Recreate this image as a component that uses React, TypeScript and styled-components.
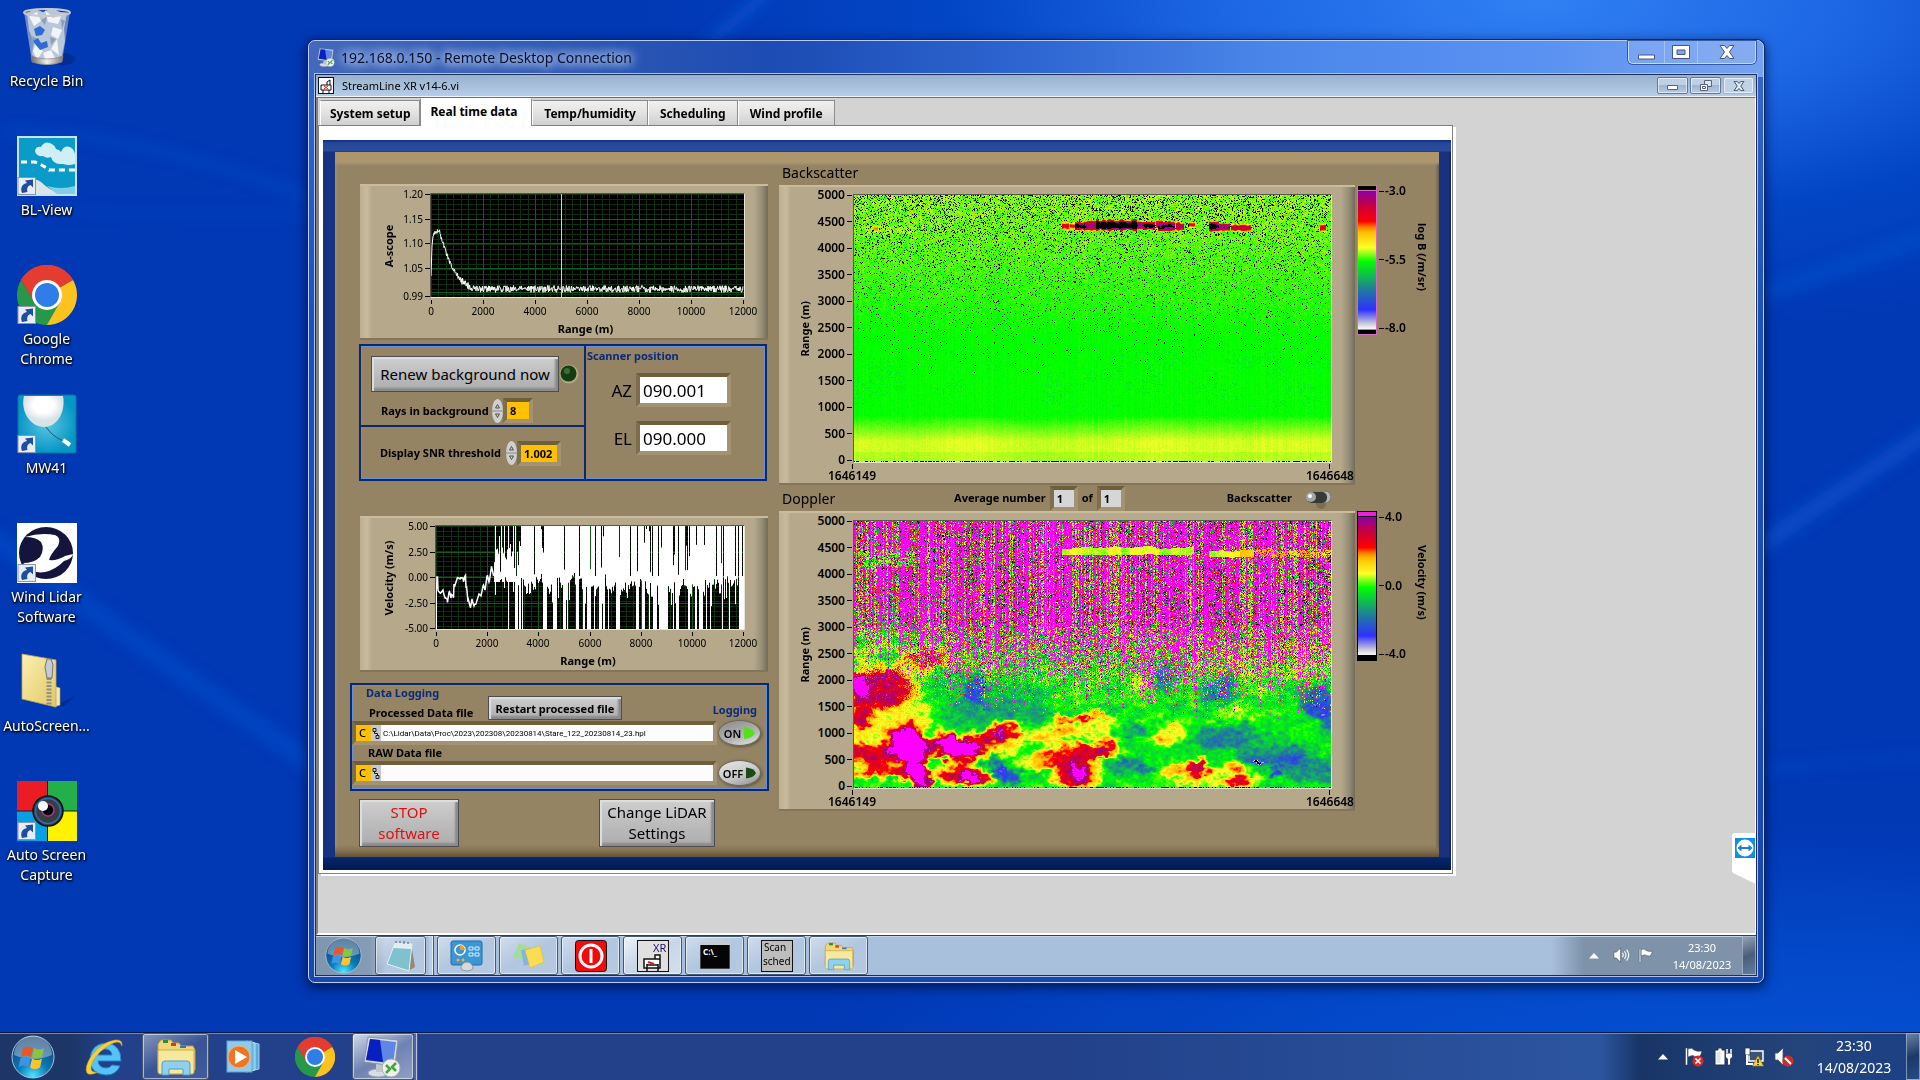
import React, { useEffect, useRef } from "react";
import styled, { createGlobalStyle, css } from "styled-components";

const Global = createGlobalStyle`
  *, *::before, *::after { box-sizing: border-box; }
  html, body { margin: 0; height: 100%; }
  body { font-family: "Noto Sans", "Open Sans", sans-serif; font-size: 14px; overflow: hidden; background: #0138b4; }
  #root { height: 100%; }
  button, input { font-family: inherit; margin: 0; }
  svg { display: block; flex: none; }
`;

/* ---------- random helpers ---------- */

function makeRandom(seed: number) {
  let s = seed >>> 0;
  return () => {
    s = (s + 0x6d2b79f5) >>> 0;
    let t = Math.imul(s ^ (s >>> 15), 1 | s);
    t = (t + Math.imul(t ^ (t >>> 7), 61 | t)) ^ t;
    return ((t ^ (t >>> 14)) >>> 0) / 4294967296;
  };
}

function lattice(x: number, y: number) {
  let h = Math.imul(x, 374761393) + Math.imul(y, 668265263);
  h = Math.imul(h ^ (h >>> 13), 1274126177);
  return ((h ^ (h >>> 16)) >>> 0) / 4294967296;
}

function smooth(x: number, y: number) {
  const xi = Math.floor(x);
  const yi = Math.floor(y);
  const fx = x - xi;
  const fy = y - yi;
  const u = fx * fx * (3 - 2 * fx);
  const v = fy * fy * (3 - 2 * fy);
  const a = lattice(xi, yi) * (1 - u) + lattice(xi + 1, yi) * u;
  const b = lattice(xi, yi + 1) * (1 - u) + lattice(xi + 1, yi + 1) * u;
  return (a * (1 - v) + b * v) * 2 - 1;
}

/* ---------- colour ramp shared by both maps ---------- */

type Stop = [number, number, number, number];
const ramp: Stop[] = [
  [0, 250, 250, 250],
  [0.04, 200, 200, 215],
  [0.14, 48, 48, 255],
  [0.28, 32, 120, 160],
  [0.49, 0, 255, 0],
  [0.59, 255, 255, 40],
  [0.7, 255, 190, 0],
  [0.74, 255, 120, 0],
  [0.78, 255, 0, 0],
  [0.89, 200, 0, 60],
  [1, 140, 0, 165],
];

function colourAt(v: number, over: number[]): number[] {
  if (v > 1) return over;
  if (v < 0) return [0, 0, 0];
  for (let i = 1; i < ramp.length; i++) {
    if (v <= ramp[i][0]) {
      const a = ramp[i - 1];
      const b = ramp[i];
      const t = (v - a[0]) / (b[0] - a[0]);
      return [a[1] + (b[1] - a[1]) * t, a[2] + (b[2] - a[2]) * t, a[3] + (b[3] - a[3]) * t];
    }
  }
  return over;
}

const rampCss = ramp
  .slice()
  .reverse()
  .map((s) => `rgb(${s[1]},${s[2]},${s[3]}) ${Math.round((1 - s[0]) * 100)}%`)
  .join(", ");

const MAP_W = 477;
const MAP_H = 267;

/* start, end, height in metres, half thickness, strength */
const cloudBits = [
  [208, 214, 4420, 50, 0.28], [216, 221, 4420, 40, 0.24], [221, 230, 4420, 60, 0.46], [230, 244, 4430, 62, 0.42],
  [242, 282, 4440, 72, 0.56], [282, 290, 4435, 60, 0.42], [290, 300, 4425, 60, 0.46], [302, 308, 4460, 60, 0.32],
  [304, 320, 4415, 70, 0.45], [322, 329, 4415, 60, 0.36], [335, 340, 4450, 40, 0.25], [355, 364, 4415, 65, 0.48],
  [364, 375, 4405, 55, 0.4], [377, 396, 4390, 45, 0.34], [466, 471, 4390, 50, 0.28], [20, 23, 4375, 40, 0.22],
];

function backscatter(px: (x: number, y: number, c: number[]) => void) {
  const rnd = makeRandom(11);
  for (let y = 0; y < MAP_H; y++) {
    const h = 5000 * (1 - y / (MAP_H - 2));
    let base = 0.49;
    if (h < 850) base = 0.49 + 0.082 * Math.min(1, Math.max(0, (850 - h) / 480));
    if (h < 160) base -= 0.012;
    const up = Math.max(0, (h - 2300) / 2700);
    const fall = Math.max(0, (h - 1500) / 3500);
    const black = 0.2 * Math.pow(fall, 1.7);
    for (let x = 0; x < MAP_W; x++) {
      const col = (lattice(x, 7) - 0.5) * 0.01;
      const n = rnd() + rnd() - 1;
      let v = base + col + up * 0.052 + n * (0.01 + 0.055 * up) + (h < 800 ? smooth(x / 60, 3) * 0.008 : 0);
      if (h > 1000 && h < 2100 && n < -0.4 && smooth(x / 20, y / 12) > 0.1) v -= 0.03;
      if (h > 4280 && h < 4420 && x > 10 && x < 60) v += 0.015;
      let hole = rnd() < black;
      for (const [a, b, c, t, s] of cloudBits) {
        const thick = t * 1.5 * (1 + smooth(x / 3, c / 9) * 0.25);
        if (x >= a && x <= b && Math.abs(h - c) < thick) {
          const d = Math.abs(h - c) / thick;
          v = Math.max(v, 0.5 + s * (1.2 - d * d * 0.9 + smooth(x / 3, y / 2) * 0.15));
          hole = false;
        }
      }
      if (y === MAP_H - 1) hole = rnd() < 0.5;
      px(x, y, hole ? [0, 0, 0] : colourAt(v, [0, 0, 0]));
    }
  }
}

/* centre x, centre y, radius x, radius y, amplitude */
const blobs = [
  [53, 221, 16, 15, 0.56], [60, 240, 10, 14, 0.42], [28, 168, 28, 16, 0.42], [2, 168, 9, 14, 0.3],
  [18, 233, 28, 9, 0.42], [68, 256, 8, 9, 0.52], [33, 250, 34, 6, 0.32], [6, 197, 9, 10, 0.32],
  [92, 225, 20, 9, 0.44], [90, 216, 10, 9, 0.28], [108, 231, 16, 9, 0.4], [122, 222, 20, 9, 0.32],
  [138, 214, 12, 6, 0.22], [151, 208, 12, 7, 0.34], [108, 253, 20, 9, 0.38], [122, 256, 14, 8, 0.24],
  [70, 137, 24, 8, 0.26], [213, 198, 18, 4, 0.24], [238, 194, 18, 4, 0.26], [216, 251, 15, 10, 0.38],
  [228, 230, 28, 8, 0.34], [190, 240, 22, 8, 0.24], [230, 250, 14, 12, 0.26], [250, 226, 14, 8, 0.2],
  [344, 245, 8, 6, 0.28], [330, 249, 22, 7, 0.14], [380, 244, 8, 5, 0.2], [386, 261, 12, 6, 0.3], [362, 254, 34, 10, 0.12],
  [317, 212, 16, 10, 0.15], [310, 222, 8, 6, 0.1], [380, 191, 20, 8, 0.11], [420, 170, 22, 7, 0.08],
  [180, 213, 34, 9, 0.16], [238, 208, 32, 8, 0.14], [150, 230, 12, 10, 0.1], [40, 195, 40, 14, 0.13],
  [20, 215, 34, 8, 0.1], [70, 190, 8, 12, 0.08], [285, 163, 12, 6, 0.12], [240, 175, 34, 7, 0.06],
  [60, 145, 60, 20, 0.08], [420, 140, 60, 16, 0.08],
  [100, 160, 24, 12, -0.12], [121, 169, 9, 14, -0.2], [85, 190, 26, 14, -0.08], [155, 190, 38, 18, -0.11],
  [152, 254, 10, 8, -0.3], [142, 243, 12, 7, -0.14], [276, 209, 18, 6, -0.15], [272, 243, 18, 8, -0.14],
  [308, 160, 9, 12, -0.18], [362, 175, 16, 9, -0.18], [372, 158, 8, 10, -0.14], [465, 183, 16, 12, -0.24],
  [474, 198, 8, 9, -0.2], [440, 168, 22, 7, -0.1], [372, 216, 28, 9, -0.16], [420, 233, 30, 9, -0.17],
  [450, 246, 36, 12, -0.13], [404, 242, 4, 2, -0.4], [418, 251, 4, 4, -0.2], [293, 248, 8, 5, -0.12], [38, 137, 10, 7, -0.12],
];

function doppler(px: (x: number, y: number, c: number[]) => void) {
  const rnd = makeRandom(29);
  const magenta = [255, 0, 255];
  const strong = [0.9, 0.98, 0.8, 0.6, 0.56, 0.68, 0.95, 0.85, 0.3, -1, -1, -1, 0.97, 0.5];
  const weak = [0.6, 0.56, 0.5, 0.68, 0.8, 0.47, 0.53, 0.9, 0.58, -1, 0.3, 0.62, 0.07, 0.75];
  for (let x = 0; x < MAP_W; x++) {
    const kind = rnd();
    const share = kind < 0.32 ? 0.72 + rnd() * 0.2 : kind < 0.68 ? 0.42 + rnd() * 0.2 : 0.1 + rnd() * 0.2;
    const floor = 1700 + (x < 90 ? 520 * (1 - x / 180) : 0) + smooth(x / 40, 9) * 180 + (rnd() - 0.5) * 900;
    for (let y = 0; y < MAP_H; y++) {
      const h = 5000 * (1 - y / (MAP_H - 2));
      let v =
        0.465 + smooth(x / 17, y / 8) * 0.05 + smooth(x / 6 + 40, y / 4) * 0.05 +
        smooth(x / 2.5, y / 2) * 0.045 + (rnd() - 0.5) * 0.02;
      for (const [cx, cy, rx, ry, a] of blobs) {
        const dx = (x - cx + smooth(x / 7, y / 5 + 80) * 5 + smooth(x / 3, y / 2 + 30) * 2) / rx;
        const dy = (y - cy + smooth(x / 7 + 60, y / 5) * 4 + smooth(x / 3 + 20, y / 2) * 2) / ry;
        const d = dx * dx + dy * dy;
        if (d < 5) v += a * Math.exp(-d * d * 0.45);
      }
      if (h > 1200) v += (rnd() - 0.5) * 0.2 * Math.min(1, (h - 1200) / 900);
      const chance = Math.min(0.97, Math.max(0, (h - floor) / 1100));
      const drop = x > 350 ? 40 : 0;
      const edge = smooth(x / 9, 2) * 30 + smooth(x / 3, 6) * 15;
      const band =
        h > 4370 - drop + edge / 3 && h < 4505 - drop + edge &&
        ((x > 207 && x < 340) || (x > 354 && x < 400) || (x > 400 && rnd() < 0.55));
      if (band) {
        v = 0.58 + smooth(x / 10, 5) * 0.05 + (x > 385 ? 0.09 : 0) + (rnd() - 0.5) * 0.05;
      } else if (rnd() < chance) {
        const patch = x > 8 && x < 62 && h > 4150 && h < 4450 && rnd() < 0.4;
        const m = h < 3200 ? share * (0.75 + (h - 1800) / 5600) : share;
        if (patch) v = 0.47 + rnd() * 0.12;
        else if (rnd() < m) v = 2;
        else v = (share > 0.35 && h > 3000 ? strong : weak)[Math.floor(rnd() * 14)];
      }
      if (y === MAP_H - 1) v = rnd() < 0.4 ? -1 : 0.48;
      px(x, y, colourAt(v, magenta));
    }
  }
}

/* ---------- desktop ---------- */

const Desktop = styled.div`
  position: relative;
  display: flex;
  flex-direction: column;
  min-height: 100vh;
  overflow: hidden;
  background:
    radial-gradient(ellipse 900px 340px at 80% 0, #3180f3 0%, #1c66e4 35%, rgba(3, 74, 203, 0.75) 65%, rgba(1, 56, 180, 0) 100%),
    radial-gradient(ellipse 1000px 260px at 92% 100%, #0552d4 0%, #0349ca 45%, rgba(1, 56, 180, 0) 100%),
    #0138b4;
`;

const Streaks = styled.svg`
  position: absolute;
  inset: 0;
  width: 100%;
  height: 100%;
`;

const Shortcuts = styled.nav`
  position: relative;
  flex: 1;
  width: 93px;
  padding-top: 7px;
`;

const Shortcut = styled.a`
  display: flex;
  flex-direction: column;
  align-items: center;
  gap: 4px;
  height: 129px;
  color: #fff;
  text-decoration: none;
  text-align: center;
  font-size: 14px;
  line-height: 20px;
  text-shadow: 1px 1px 2px #000, 0 1px 3px #000;
`;

const ArrowBadge = () => (
  <g>
    <rect x="1" y="41.500" width="17.500" height="17" fill="#e6edf5" stroke="#8a97a8" />
    <path d="M5 57c-2-5 0-9 5-10l-2-2.500 8-1v8l-2.500-2.500c-3 1-4 4-3 7z" fill="#1f4f9c" />
  </g>
);

const ChromeMark = ({ size }: { size: number }) => (
  <svg width={size} height={size} viewBox="0 0 60 60">
    <path d="M30 30 4 15A30 30 0 0 1 56 15z" fill="#e53c30" />
    <path d="M30 30 56 15A30 30 0 0 1 30 60l-9-20z" fill="#fcc31e" />
    <path d="M30 30 43 37 30 60A30 30 0 0 1 4 15l14 23z" fill="#27984a" />
    <path d="M4 15A30 30 0 0 1 56 15H30L17 37z" fill="#e53c30" />
    <circle cx="30" cy="30" r="15" fill="#fff" />
    <circle cx="30" cy="30" r="12" fill="#2f7de9" />
  </svg>
);

const shortcutIcons: Record<string, React.ReactNode> = {
  bin: (
    <svg width="60" height="60" viewBox="0 0 60 60">
      <defs>
        <linearGradient id="binBody" x1="0" x2="1">
          <stop offset="0" stopColor="#7f97c4" stopOpacity=".8" />
          <stop offset=".5" stopColor="#c3d2e4" stopOpacity=".9" />
          <stop offset="1" stopColor="#7189bd" stopOpacity=".8" />
        </linearGradient>
        <linearGradient id="binBase" x1="0" x2="1">
          <stop offset="0" stopColor="#6f6b67" />
          <stop offset=".5" stopColor="#f2efec" />
          <stop offset="1" stopColor="#7c7873" />
        </linearGradient>
      </defs>
      <ellipse cx="46" cy="52" rx="12" ry="6" fill="#02227a" opacity=".5" />
      <path d="M7 5 15 55q15 6 30 0L53 5z" fill="url(#binBody)" />
      <path d="M10 6 18 2l8 3 9-4 8 4 7 1-3 16 1 12-4 18-10 3-14 0-5-8 2-12-5-12z" fill="#b9c8d8" />
      <path d="M12 9l8-4 4 9-7 5zM28 3l8 8 9-4-4 10-10-2zM36 20l9 3-4 9-7-4zM18 38l8 6-6 9-4-9zM40 32l-6 10 8 6zM26 46l8-3 4 8-9 4z" fill="#f1f5f8" />
      <path d="M24 13l6-3-2 8zM44 12l4 2-3 8zM33 30l6 2-5 6zM15 29l5 3-3 5z" fill="#8c9fb8" />
      <path d="M17 22l6-3 5 4-3 5-6 1zM16 34l5-3 3 5 6-2 1 6-8 3z" fill="#2e6bd2" />
      <ellipse cx="30" cy="5.500" rx="23" ry="3.500" fill="none" stroke="#c9c9c9" strokeWidth="2" />
      <path d="M14 49q16 6 32 0l-1 6q-15 5-30 0z" fill="url(#binBase)" stroke="#817d78" strokeWidth=".6" />
    </svg>
  ),
  blview: (
    <svg width="60" height="60" viewBox="0 0 60 60">
      <rect width="60" height="60" fill="#c8e3ec" />
      <rect x="2" y="2" width="56" height="56" fill="#0a9bc8" />
      <path d="M18 15q1-5 6-4 3-6 9-4 5 2 6 6 4 1 5 3 3-7 9-5 4 2 5 7v10q-6 2-12 0-10 1-12-7-4 2-8-1-7 1-8-5z" fill="#cfeef6" />
      <path d="M4 26h14q8 3 14 8h26" fill="none" stroke="#fff" strokeWidth="3" strokeDasharray="6 4" />
      <path d="M2 44q14-4 22 2 8 8 20 12H2z" fill="#dfe3e4" />
      <path d="M30 50q14 4 28 0v8H40z" fill="#7fd0e6" />
      <ArrowBadge />
    </svg>
  ),
  mw41: (
    <svg width="60" height="60" viewBox="0 0 60 60">
      <defs>
        <radialGradient id="sky"><stop offset="0" stopColor="#5cc6e2" /><stop offset="1" stopColor="#0797c5" /></radialGradient>
        <radialGradient id="balloon" cy=".3"><stop offset=".5" stopColor="#fff" /><stop offset="1" stopColor="#d9e2e6" /></radialGradient>
      </defs>
      <rect x="1" y="1" width="58" height="58" rx="2" fill="url(#sky)" stroke="#07749c" />
      <path d="M7 2h39c3 16-6 31-19 31S3 18 7 2z" fill="url(#balloon)" />
      <path d="M29 33q6 9 17 14" fill="none" stroke="#24586c" />
      <path d="M46 46l7 5" stroke="#fff" strokeWidth="4" />
      <ArrowBadge />
    </svg>
  ),
  lidar: (
    <svg width="60" height="60" viewBox="0 0 60 60">
      <rect width="60" height="60" fill="#fff" />
      <ellipse cx="29" cy="30" rx="27" ry="26" fill="#14143c" />
      <path d="M8 14q16-5 30-2 7 3 3 11-8 9-9 14 8 1 16-4l8-2q-1 5-9 7-9 9-19 11-12 2-17-6l-5-3q11 0 17-6 5-8 1-15-5-5-16-5z" fill="#fff" />
      <ArrowBadge />
    </svg>
  ),
  zip: (
    <svg width="60" height="60" viewBox="0 0 60 60">
      <defs>
        <linearGradient id="zipFront" x1="0" y1="0" x2="1" y2="1"><stop offset="0" stopColor="#fbf0b4" /><stop offset="1" stopColor="#e2c863" /></linearGradient>
      </defs>
      <path d="M42 52l16-8-12 11z" fill="#02227a" opacity=".6" />
      <path d="M37 34l6 2v17l-6 2z" fill="#f3e9b4" stroke="#b59c3d" strokeWidth=".6" />
      <path d="M5 2l34 6v47L5 47z" fill="url(#zipFront)" stroke="#bfa64e" strokeWidth=".8" />
      <path d="M32 26v28" stroke="#8c8f94" strokeWidth="5" strokeDasharray="2 1.500" />
      <path d="M30 7h4l2 6-1 13h-5l-2-11z" fill="#c6cbd3" stroke="#6d737d" />
    </svg>
  ),
  capture: (
    <svg width="60" height="60" viewBox="0 0 60 60">
      <rect width="30" height="30" fill="#ec1c24" />
      <rect x="30" width="30" height="30" fill="#23b04b" />
      <rect y="30" width="30" height="30" fill="#07a0e6" />
      <rect x="30" y="30" width="30" height="30" fill="#fff200" />
      <path d="M30.500 0v60M0 30h60" stroke="#1a1a1a" />
      <circle cx="31" cy="30" r="15" fill="#3b3b40" stroke="#111" strokeWidth="1.500" />
      <circle cx="31" cy="30" r="12.500" fill="none" stroke="#1d74c4" strokeWidth="1.500" />
      <circle cx="31" cy="29" r="6" fill="#000" stroke="#9b3a9b" strokeWidth="1.500" />
      <circle cx="26" cy="25" r="5" fill="#fff" />
      <ArrowBadge />
    </svg>
  ),
};

const desktopItems: [string, React.ReactNode][] = [
  ["Recycle Bin", shortcutIcons.bin],
  ["BL-View", shortcutIcons.blview],
  ["Google Chrome", null],
  ["MW41", shortcutIcons.mw41],
  ["Wind Lidar Software", shortcutIcons.lidar],
  ["AutoScreen...", shortcutIcons.zip],
  ["Auto Screen Capture", shortcutIcons.capture],
];

const ChromeShortcut = () => (
  <svg width="60" height="60" viewBox="0 0 60 60">
    <ChromeMark size={60} />
    <ArrowBadge />
  </svg>
);

/* ---------- taskbar ---------- */

const TaskbarRoot = styled.footer<{ $remote?: boolean }>`
  position: relative;
  flex: none;
  display: flex;
  align-items: stretch;
  height: ${(p) => (p.$remote ? 40 : 48)}px;
  color: #fff;
  font-size: ${(p) => (p.$remote ? 11 : 14)}px;
  line-height: ${(p) => (p.$remote ? 17 : 22)}px;
  border-top: 1px solid ${(p) => (p.$remote ? "#2c4257" : "#0a1a40")};
  box-shadow: inset 0 1px 0 ${(p) => (p.$remote ? "#c4d4e6" : "#7488b4")};
  background: ${(p) =>
    p.$remote
      ? "linear-gradient(90deg, #7f95ad 0, #869cb4 54px, #a9c0dc 70px, #a9c0dc calc(100% - 205px), #7e93aa calc(100% - 172px), #7e93aa 100%)"
      : "linear-gradient(90deg, #1d3667 0, #1d3667 70px, #22418a 110px, #22418a 55%, #2c55a0 calc(100% - 320px), #183566 calc(100% - 280px), #24447c calc(100% - 120px), #1b4085 100%)"};
`;

const TaskButton = styled.button<{ $w: number; $state?: "open" | "active" }>`
  flex: none;
  display: flex;
  align-items: center;
  justify-content: center;
  width: ${(p) => p.$w}px;
  padding: 0;
  border: 0;
  background: none;
  ${(p) =>
    p.$state &&
    css`
      border: 1px solid #46596e;
      border-radius: 3px;
      box-shadow: inset 0 0 0 1px rgba(255, 255, 255, 0.55);
      background: ${p.$state === "active"
        ? "linear-gradient(150deg, rgba(255,255,255,.8), rgba(255,255,255,.35) 50%, rgba(255,255,255,.5))"
        : "linear-gradient(150deg, rgba(255,255,255,.45), rgba(255,255,255,.1) 50%, rgba(255,255,255,.15))"};
    `}
`;

const Slice = styled.span<{ $w: number }>`
  width: ${(p) => p.$w}px;
  border-right: 1px solid #46596e;
  box-shadow: inset -1px 0 0 rgba(255, 255, 255, 0.6);
  background: rgba(255, 255, 255, 0.2);
`;

const RemoteButtons = styled.div`
  display: flex;
  gap: 3px;
  padding-left: 4px;
`;

const Tray = styled.div`
  display: flex;
  align-items: center;
  margin-left: auto;
`;

const TrayIcons = styled.div<{ $gap: number }>`
  display: flex;
  align-items: center;
  gap: ${(p) => p.$gap}px;
  padding-right: 8px;
  > :first-child { margin-right: 6px; }
`;

const Clock = styled.time<{ $w: number }>`
  width: ${(p) => p.$w}px;
  text-align: center;
`;

const ShowDesktop = styled.button`
  align-self: stretch;
  width: 14px;
  padding: 0;
  border: 1px solid rgba(190, 205, 225, 0.6);
  background: linear-gradient(160deg, rgba(160, 170, 185, 0.6), rgba(30, 50, 80, 0.55) 50%, rgba(60, 90, 140, 0.4));
`;

const StartOrb = ({ size }: { size: number }) => (
  <svg width={size} height={size} viewBox="0 0 44 44">
    <defs>
      <radialGradient id="orb" cy=".95" r=".9">
        <stop offset="0" stopColor="#4fe3ff" />
        <stop offset=".4" stopColor="#0a7ab8" />
        <stop offset="1" stopColor="#123d70" />
      </radialGradient>
    </defs>
    <circle cx="22" cy="22" r="21" fill="url(#orb)" stroke="#a9c4dc" />
    <path d="M3 20A19 19 0 0 1 41 20Q22 28 3 20z" fill="#fff" opacity=".35" />
    <path d="M12 13q5-3 10 0l-2 9q-5-3-10 0z" fill="#e8562a" />
    <path d="M23 13q5 3 10 0l-2 9q-5 3-10 0z" fill="#8cc43c" />
    <path d="M9.500 23q5-3 10 0l-2 9q-5-3-10 0z" fill="#3f93e0" />
    <path d="M21 23.500q5 3 10 0l-2 9q-5 3-10 0z" fill="#fbc532" />
  </svg>
);

const FolderMark = ({ size }: { size: number }) => (
  <svg width={size} height={size} viewBox="0 0 42 42">
    <path d="M3 8l3-4h10l2 3h6l2 3h12l2 4v20H3z" fill="#f0d878" stroke="#bf9f3f" />
    <path d="M8 4h5v3H8z" fill="#2c8a3e" /><path d="M16 7h5v3h-5z" fill="#c8432c" /><path d="M25 10h6v2h-6z" fill="#2c7ab8" />
    <path d="M3 14h36v22q0 2-2 2H5q-2 0-2-2z" fill="#f8e89d" stroke="#c9ab4c" />
    <path d="M7 39V28q0-3 3-3h22q3 0 3 3v11h-7v-6H14v6z" fill="#8fd0ee" stroke="#4f9cc6" />
  </svg>
);

const IeMark = () => (
  <svg width="40" height="40" viewBox="0 0 40 40">
    <path d="M37 24H14q1 7 8 7 4 0 6-3l8 1q-4 9-14 9Q6 37 6 22 7 7 22 6q15 1 15 18zM14 18h14q-1-6-7-6t-7 6z" fill="#55c3f5" stroke="#1d86cf" />
    <path d="M38 9q1-7-7-6Q18 5 8 18 0 30 3 36q3 3 11-1-7 1-7-4 0-7 9-16Q26 6 33 5q4 0 5 4z" fill="#f8cf3a" stroke="#d59f10" strokeWidth=".6" />
  </svg>
);

const PlayerMark = () => (
  <svg width="34" height="36" viewBox="0 0 34 36">
    <path d="M24 3l9 2v25l-9 2z" fill="#5da9d8" stroke="#9fd2ee" />
    <path d="M20 2l9 2v27l-9 2z" fill="#7cc0e6" stroke="#b5def2" />
    <rect x="1" y="2" width="25" height="31" fill="#8fcbea" stroke="#5ba7d2" />
    <circle cx="13" cy="18" r="11" fill="#ee7623" stroke="#f7b37e" />
    <path d="M9 11l12 7-12 7z" fill="#fff" />
  </svg>
);

const RdpMark = ({ size }: { size: number }) => (
  <svg width={size} height={size} viewBox="0 0 42 42">
    <ellipse cx="16" cy="37" rx="10" ry="4" fill="#d9dde3" stroke="#9aa2ae" />
    <path d="M14 28h8v8h-8z" fill="#c1c7cf" />
    <path d="M6 1l30 3-3 26L2 26z" fill="#d5dbe4" stroke="#8a93a3" />
    <path d="M8 3l26 3-3 22L4 24z" fill="#5f86e6" />
    <path d="M8 3l10 1 3 22L4 24z" fill="#0a1fc0" />
    <circle cx="29" cy="32" r="9" fill="#eef1ee" stroke="#aab2aa" />
    <path d="M24 29l4 4-4 4M34 27l-4 4 4 4" fill="none" stroke="#3fa53c" strokeWidth="2.500" />
  </svg>
);

const Caret = () => (
  <svg width="10" height="6" viewBox="0 0 10 6"><path d="M5 0l5 5.500H0z" fill="#fff" /></svg>
);

const SpeakerMark = ({ muted, size = 20 }: { muted?: boolean; size?: number }) => (
  <svg width={size} height={size} viewBox="0 0 20 20">
    <path d="M1 6h3l5-5v17l-5-5H1z" fill="#fff" stroke="#47545f" strokeWidth=".8" />
    {muted ? (
      <g><circle cx="14" cy="14" r="5.500" fill="#d62a2a" /><path d="M11 11l6 6" stroke="#fff" strokeWidth="2" /></g>
    ) : (
      <path d="M11 7q2 2.500 0 5M13.500 5q3.500 4.500 0 9M16 3q5 6.500 0 13" fill="none" stroke="#fff" strokeWidth="1.300" />
    )}
  </svg>
);

const FlagMark = ({ alert, size = 20 }: { alert?: boolean; size?: number }) => (
  <svg width={size} height={size} viewBox="0 0 20 20">
    <path d="M1.500 1h2v17h-2z" fill="#fff" stroke="#37475a" strokeWidth=".6" />
    <path d="M4 2q4-2 6 1 3 2 8 1-1 4-3 6-5 0-6-1.500Q7 8.500 4 10z" fill="#fff" stroke="#37475a" strokeWidth=".6" />
    {alert && (
      <g><circle cx="14" cy="14" r="5.500" fill="#d62a2a" /><path d="M11.500 11.500l5 5M16.500 11.500l-5 5" stroke="#fff" strokeWidth="1.600" /></g>
    )}
  </svg>
);

const BatteryMark = () => (
  <svg width="20" height="20" viewBox="0 0 20 20">
    <path d="M1 3h3V1h4v2h3v15H1z" fill="#fff" stroke="#20304a" />
    <path d="M2.500 5h4v11h-4z" fill="#dfe5ee" />
    <path d="M11.500 6h7v4l-2 2v6h-3v-6l-2-2z" fill="#fff" stroke="#20304a" strokeWidth=".8" />
    <path d="M13 2v4M17 2v4" stroke="#fff" strokeWidth="1.500" />
  </svg>
);

const NetworkMark = () => (
  <svg width="20" height="20" viewBox="0 0 20 20">
    <rect x="5" y="4" width="14" height="10" fill="#3d5478" stroke="#fff" strokeWidth="1.500" />
    <path d="M1 1h5v7H1z" fill="#fff" stroke="#20304a" strokeWidth=".8" /><path d="M3 8v9h6" stroke="#fff" strokeWidth="2" fill="none" />
    <path d="M14 9l5.500 10h-11z" fill="#f7d530" stroke="#a98a10" strokeWidth=".6" />
    <path d="M14 12v4M14 17v1.200" stroke="#222" strokeWidth="1.500" />
  </svg>
);

/* ---------- remote desktop window ---------- */

const RemoteWindow = styled.section`
  position: absolute;
  inset: 40px 156px 97px 308px;
  display: flex;
  flex-direction: column;
  padding: 0 7px 7px;
  border: 1px solid #b6cdf2;
  border-radius: 7px;
  background:
    linear-gradient(90deg, #4468bc 0, #3058b4 18%, #1c4cb4 32%, #2f66d2 50%, #4a86ea 66%, #5a92f2 85%, #76a2f0 100%) 0 0 / 100% 36px no-repeat,
    linear-gradient(180deg, #3a68cc 0, #1d50bc 30%, #1a47ad 100%);
  box-shadow: 0 0 0 1px #0a2a66, 0 3px 12px 1px rgba(0, 8, 50, 0.75);
`;

const TitleBar = styled.header`
  flex: none;
  display: flex;
  height: 34px;
  padding-left: 1px;
`;

const TitleText = styled.h1`
  display: flex;
  align-items: center;
  gap: 5px;
  margin: 0;
  padding-bottom: 2px;
  font-size: 14px;
  font-weight: 400;
  color: #06102c;
  text-shadow: 0 0 8px #c2d3f2, 0 0 10px #c2d3f2, 0 0 14px #a8c0ec, 0 0 14px #a8c0ec;
`;

const CaptionGroup = styled.div`
  display: flex;
  height: 23px;
  margin-left: auto;
  border: 1px solid #c5d9f8;
  border-top: 0;
  border-radius: 0 0 5px 5px;
  box-shadow: 0 0 0 1px #35589e;
`;

const CaptionButton = styled.button<{ $w: number }>`
  display: flex;
  align-items: center;
  justify-content: center;
  width: ${(p) => p.$w}px;
  padding: 0;
  border: 0;
  border-left: 1px solid rgba(170, 200, 245, 0.8);
  background: rgba(255, 255, 255, 0.12);
  &:first-child { border-left: 0; }
`;

const Screen = styled.div`
  flex: 1;
  min-height: 0;
  display: flex;
  flex-direction: column;
  outline: 1px solid #1b2f5a;
  box-shadow: 0 0 0 2px #a9c2ee;
  background: #d3d3d3;
`;

const MdiBar = styled.header`
  flex: none;
  display: flex;
  align-items: center;
  gap: 8px;
  height: 22px;
  padding: 0 2px;
  background: linear-gradient(180deg, #98b1ce, #b7cde8);
  border-bottom: 1px solid #eef3f8;
  font-size: 11px;
  h2 { margin: 0 auto 0 0; font-size: 11px; font-weight: 400; }
`;

const MdiControls = styled.div`
  display: flex;
  gap: 2px;
`;

const MdiButton = styled.button`
  display: flex;
  align-items: center;
  justify-content: center;
  width: 31px;
  height: 17px;
  padding: 0;
  border: 1px solid #5f7896;
  border-radius: 2px;
  box-shadow: inset 0 0 0 1px rgba(255, 255, 255, 0.6);
  background: linear-gradient(180deg, #bdd0e5 50%, #9fb6d0 50%, #b4cbe4);
  &:last-child { border-color: #9fb4cd; background: #bfd2e8; }
`;

const Workspace = styled.main`
  position: relative;
  flex: 1;
  min-height: 0;
  border-top: 1px solid #707070;
  border-left: 2px solid #808080;
  border-right: 1px solid #fff;
  border-bottom: 2px solid #fff;
`;

const TabList = styled.div`
  display: flex;
  align-items: flex-end;
  height: 27px;
  padding-left: 2px;
`;

const Tab = styled.button<{ $on?: boolean }>`
  height: 25px;
  padding: 0 11px;
  border: 1px solid #8c8c8c;
  border-left-color: #fff;
  border-bottom: 0;
  background: linear-gradient(180deg, #f0f0f0, #e2e2e2 50%, #cfcfcf);
  font-size: 12px;
  font-weight: 700;
  &:first-child { padding: 0 9px; }
  ${(p) =>
    p.$on &&
    css`
      position: relative;
      z-index: 1;
      height: 28px;
      margin-bottom: -1px;
      padding: 0 14px 3px 9px;
      border-color: #fff #8c8c8c #fff #8c8c8c;
      background: #fff;
    `}
`;

const TabPage = styled.div`
  width: fit-content;
  padding: 14px 1px 3px 4px;
  border: 1px solid #808080;
  background: #fff;
  box-shadow: 3px 2px 0 #fff;
`;

const BlueFrame = styled.div`
  padding: 12px 12px 13px;
  background:
    linear-gradient(180deg, #0b2c80 0, #26469a 3px, #2c4c9c 11px, transparent 12px),
    linear-gradient(0deg, #031a50 0, #05246c 12px, transparent 13px),
    linear-gradient(270deg, #0f2260 0, #1a3482 3px, transparent 4px),
    #18327f;
`;

const FrontPanel = styled.div`
  display: flex;
  gap: 10px;
  width: 1104px;
  padding: 0 0 10px 15px;
  background:
    linear-gradient(180deg, #b0946a 0, #ab9770 10px, rgba(148, 132, 99, 0) 14px),
    linear-gradient(0deg, #5f5138 0, #81714f 6px, rgba(148, 132, 99, 0) 12px),
    linear-gradient(90deg, #a08f6d 0, rgba(148, 132, 99, 0) 3px),
    linear-gradient(270deg, #6c6049 0, rgba(148, 132, 99, 0) 4px),
    #948463;
`;

const LeftColumn = styled.div`
  display: flex;
  flex-direction: column;
  width: 419px;
  padding-top: 32px;
`;

const RightColumn = styled.div`
  flex: 1;
  padding-top: 7px;
`;

const raised = css`
  background:
    linear-gradient(270deg, #726b58 0, #958d76 6px, #b5a88b 14px, transparent 16px),
    linear-gradient(90deg, #bdb092 0, #c8bb9d 7px, transparent 12px),
    #b5a88b;
  border-top: 2px solid #c9bb9c;
  border-bottom: 2px solid #82755a;
`;

const ScopePanel = styled.figure<{ $gap: number }>`
  width: 408px;
  height: 156px;
  margin: 0 0 ${(p) => p.$gap}px 10px;
  ${raised}
`;

const blueBox = css`
  border: 2px solid #0a2870;
  box-shadow: inset 1px 1px 0 #6f8fd0, inset -1px -1px 0 #6f8fd0;
`;

const ControlBox = styled.section`
  display: grid;
  grid-template-columns: 225px 1fr;
  width: 408px;
  height: 137px;
  margin: 0 0 35px 9px;
  ${blueBox}
`;

const BackgroundCell = styled.div`
  display: flex;
  flex-direction: column;
  gap: 6px;
  height: 81px;
  padding: 10px 0 0 10px;
  border-bottom: 2px solid #0a2870;
`;

const ThresholdCell = styled.div`
  display: flex;
  align-items: center;
  height: 52px;
  padding-left: 19px;
`;

const ControlSide = styled.div`
  border-right: 2px solid #0a2870;
`;

const Row = styled.div<{ $gap?: number; $pad?: number }>`
  display: flex;
  align-items: center;
  gap: ${(p) => p.$gap ?? 0}px;
  padding-left: ${(p) => p.$pad ?? 0}px;
`;

const BoldLabel = styled.label<{ $w?: number; $blue?: boolean }>`
  flex: none;
  width: ${(p) => (p.$w ? `${p.$w}px` : "auto")};
  margin: 0;
  color: ${(p) => (p.$blue ? "#0a2a7c" : "#000")};
  font-size: 11px;
  font-weight: 700;
  line-height: 14px;
  white-space: nowrap;
`;

const PanelButton = styled.button<{ $w: number; $h: number; $danger?: boolean; $bold?: boolean }>`
  flex: none;
  width: ${(p) => p.$w}px;
  height: ${(p) => p.$h}px;
  padding: 0;
  border: 1px solid #4d4d4d;
  box-shadow: inset 2px 2px 1px #dedede, inset -3px -3px 2px #8b8b8b;
  background: linear-gradient(180deg, #cfcfcf, #b9b9b9 60%, #adadad);
  color: ${(p) => (p.$danger ? "#e01010" : "#000")};
  font-size: ${(p) => (p.$bold ? 11 : 15)}px;
  font-weight: ${(p) => (p.$bold ? 700 : 400)};
  line-height: 21px;
`;

const sunken = css`
  border: 4px solid;
  border-color: #6f5e3c #a39372 #a39372 #7f6e4b;
`;

const NumberBox = styled.input<{ $w: number; $tone: "amber" | "white" | "grey" }>`
  flex: none;
  width: ${(p) => p.$w}px;
  height: ${(p) => (p.$tone === "white" ? 34 : 25)}px;
  padding: 0 3px;
  border-radius: 0;
  outline: 0;
  color: #000;
  background: ${(p) => ({ amber: "#ffc000", white: "#fff", grey: "#d6d6d6" })[p.$tone]};
  font-size: ${(p) => (p.$tone === "white" ? 17 : 11)}px;
  font-weight: ${(p) => (p.$tone === "white" ? 400 : 700)};
  ${sunken}
`;

const StepButton = styled.button`
  width: 11px;
  height: 24px;
  margin: 0 0 0 4px;
  padding: 0;
  border: 0;
  background: none;
`;

const Stepper = ({ name }: { name: string }) => (
  <StepButton aria-label={name}>
    <svg width="11" height="24" viewBox="0 0 11 24">
      <ellipse cx="5.500" cy="12" rx="5.500" ry="12" fill="#cfcfcf" />
      <path d="M0 12h11" stroke="#8b8b8b" />
      <path d="M3.500 9l2-3.500 2 3.500zM3.500 15l2 3.500 2-3.500z" fill="none" stroke="#444" strokeWidth=".9" />
    </svg>
  </StepButton>
);

const ScannerCell = styled.div`
  display: flex;
  flex-direction: column;
  padding: 3px 0 0 1px;
`;

const AxisField = styled.div`
  display: flex;
  align-items: center;
  justify-content: flex-end;
  gap: 4px;
  height: 34px;
  margin: 10px 34px 4px 0;
  font-size: 17px;
`;

const LogBox = styled.section`
  width: 419px;
  height: 108px;
  margin-bottom: 8px;
  padding: 1px 0;
  ${blueBox}
`;

const LogHeader = styled.div`
  display: flex;
  height: 34px;
`;

const LogTitles = styled.div`
  display: flex;
  flex-direction: column;
  gap: 6px;
  width: 136px;
  padding-left: 14px;
  > :last-child { padding-left: 3px; }
`;

const HeaderButton = styled.div`
  padding-top: 10px;
`;

const LoggingTag = styled.div`
  margin-left: auto;
  padding: 13px 10px 0 0;
`;

const PathRow = styled.div`
  display: flex;
  align-items: center;
  gap: 1px;
  height: 26px;
`;

const PathField = styled.div`
  display: flex;
  align-items: stretch;
  width: 365px;
  height: 24px;
  ${sunken}
`;

const Drive = styled.span`
  width: 15px;
  padding-left: 3px;
  background: #ffc000;
  font-size: 11px;
  font-weight: 500;
  line-height: 16px;
`;

const PathInput = styled.input`
  flex: 1;
  min-width: 0;
  padding: 0 2px;
  border: 0;
  outline: 0;
  background: #fcfcfc;
  font-family: Roboto, "Noto Sans", sans-serif;
  font-size: 8px;
  font-weight: 400;
  color: #000;
`;

const ToggleButton = styled.button<{ $on?: boolean }>`
  display: flex;
  align-items: center;
  justify-content: center;
  gap: 3px;
  width: 43px;
  height: 26px;
  padding: 0;
  border: 1px solid #6f675a;
  border-radius: 50%;
  background: linear-gradient(160deg, ${(p) => (p.$on ? "#8a8a8a, #b4b4b4 60%, #e6e6e6" : "#e8e8e8, #c4c4c4 60%, #8e8e8e")});
  box-shadow: 1px 1px 3px #5d5239;
  font-size: 11px;
  font-weight: 600;
`;

const ActionRow = styled.div`
  display: flex;
  gap: 140px;
  padding-left: 9px;
`;

/* ---------- intensity maps ---------- */

const MapHeading = styled.h3`
  display: flex;
  align-items: center;
  height: 26px;
  margin: 0;
  padding-left: 3px;
  font-size: 14px;
  font-weight: 400;
`;

const MapRow = styled.div`
  display: flex;
  align-items: flex-start;
  gap: 2px;
`;

const MapPanel = styled.figure`
  display: grid;
  grid-template-columns: 20px 38px 479px;
  grid-template-rows: 269px 20px;
  width: 576px;
  height: 300px;
  margin: 0;
  padding: 7px 0 0 16px;
  ${raised}
`;

const SideTitle = styled.span<{ $down?: boolean }>`
  align-self: center;
  justify-self: center;
  writing-mode: vertical-rl;
  transform: ${(p) => (p.$down ? "none" : "rotate(180deg)")};
  font-size: 11px;
  font-weight: 700;
  line-height: 20px;
  white-space: nowrap;
`;

const TickColumn = styled.ol`
  display: flex;
  flex-direction: column;
  justify-content: space-between;
  height: 277px;
  margin: -5px 0 0;
  padding: 0;
  list-style: none;
  font-size: 12px;
  font-weight: 600;
  line-height: 12px;
  text-align: right;
  li { display: flex; align-items: center; justify-content: flex-end; gap: 2px; padding-right: 1px; }
  li::after { content: ""; width: 5px; height: 1px; background: #000; }
`;

const MapCanvas = styled.canvas`
  display: block;
  width: 479px;
  height: 269px;
  border: 1px solid;
  border-color: #5a5a4a #e6e6d6 #e6e6d6 #5a5a4a;
`;

const RayAxis = styled.div`
  grid-column: 2 / -1;
  display: flex;
  justify-content: space-between;
  margin: 1px -22px 0 13px;
  font-size: 12px;
  font-weight: 600;
  line-height: 14px;
  span { display: flex; flex-direction: column; align-items: center; }
  span::before { content: ""; width: 1px; height: 5px; background: #000; }
`;

const ScaleBar = styled.div<{ $edge: string; $top: string }>`
  width: 20px;
  height: 150px;
  border: 1px solid ${(p) => p.$edge};
  background:
    linear-gradient(${(p) => p.$top}, ${(p) => p.$top}) 0 0 / 100% 4px no-repeat,
    linear-gradient(#000, #000) 0 100% / 100% 4px no-repeat,
    linear-gradient(180deg, ${rampCss}) 0 5px / 100% 138px no-repeat,
    ${(p) => p.$edge};
`;

const ScaleTicks = styled.ol`
  display: flex;
  flex-direction: column;
  justify-content: space-between;
  width: 31px;
  height: 149px;
  margin: 0;
  padding: 0;
  list-style: none;
  font-size: 12px;
  font-weight: 600;
  line-height: 12px;
  li { display: flex; align-items: center; gap: 1px; }
  li::before { content: ""; width: 5px; height: 1px; background: #000; }
`;

const ScaleTitle = styled.div<{ $top: number }>`
  padding: ${(p) => p.$top}px 0 0;
`;

const DopplerBar = styled.div`
  display: flex;
  align-items: center;
  width: 552px;
  height: 26px;
`;

const AverageGroup = styled.div`
  display: flex;
  align-items: center;
  gap: 4px;
  margin: 0 102px 0 auto;
`;

const heights = [5000, 4500, 4000, 3500, 3000, 2500, 2000, 1500, 1000, 500, 0];

type Painter = (px: (x: number, y: number, c: number[]) => void) => void;

function IntensityMap({ paint, label }: { paint: Painter; label: string }) {
  const ref = useRef<HTMLCanvasElement>(null);
  useEffect(() => {
    const ctx = ref.current?.getContext("2d");
    if (!ctx) return;
    const img = ctx.createImageData(MAP_W, MAP_H);
    paint((x, y, c) => {
      const i = (y * MAP_W + x) * 4;
      img.data[i] = c[0];
      img.data[i + 1] = c[1];
      img.data[i + 2] = c[2];
      img.data[i + 3] = 255;
    });
    ctx.putImageData(img, 0, 0);
  }, [paint]);
  return (
    <MapPanel>
      <SideTitle>Range (m)</SideTitle>
      <TickColumn>{heights.map((h) => <li key={h}>{h}</li>)}</TickColumn>
      <MapCanvas ref={ref} width={MAP_W} height={MAP_H} role="img" aria-label={label} />
      <RayAxis><span>1646149</span><span>1646648</span></RayAxis>
    </MapPanel>
  );
}

/* ---------- line charts ---------- */

const ChartSvg = styled.svg`
  font-family: "Noto Sans", "Open Sans", sans-serif;
  font-size: 10px;
  .title { font-size: 11px; font-weight: 700; }
`;

type ScopeProps = {
  left: number;
  ticks: [string, number][];
  title: string;
  children: React.ReactNode;
  majors: number[];
};

const PLOT_TOP = 8;
const PLOT_BOTTOM = 111;
const PLOT_RIGHT = 384;

function Scope({ left, ticks, title, children, majors }: ScopeProps) {
  const step = (PLOT_RIGHT - 1 - left) / 6;
  const minorX = Array.from({ length: 42 }, (_, i) => Math.round(left + (i * step) / 7) + 0.5);
  const minorY = Array.from({ length: 21 }, (_, i) => Math.round(PLOT_TOP + i * 5) + 0.5);
  return (
    <ChartSvg width="408" height="152" viewBox="0 0 408 152" role="img" aria-label={title}>
      <rect x={left} y={PLOT_TOP} width={PLOT_RIGHT - left} height={PLOT_BOTTOM - PLOT_TOP} fill="#000" />
      <g stroke="#0b3110">
        {minorX.map((x) => <path key={x} d={`M${x} ${PLOT_TOP}V${PLOT_BOTTOM}`} />)}
        {minorY.map((y) => <path key={y} d={`M${left} ${y}H${PLOT_RIGHT}`} />)}
      </g>
      <g stroke="#155c1b">
        {[1, 2, 3, 4, 5].map((i) => {
          const x = Math.round(left + i * step) + 0.5;
          return <path key={i} d={`M${x} ${PLOT_TOP}V${PLOT_BOTTOM}`} />;
        })}
        {majors.map((y) => <path key={y} d={`M${left} ${y + 0.5}H${PLOT_RIGHT}`} />)}
      </g>
      {children}
      <path d={`M${left - 0.5} ${PLOT_BOTTOM}V${PLOT_TOP - 0.5}H${PLOT_RIGHT}`} fill="none" stroke="#5a5546" />
      <path d={`M${left} ${PLOT_BOTTOM + 0.5}H${PLOT_RIGHT + 0.5}V${PLOT_TOP}`} fill="none" stroke="#e8e4d8" />
      {ticks.map(([text, y]) => (
        <g key={text}>
          <path d={`M${left - 6} ${y + 0.5}h5`} stroke="#000" />
          <text x={left - 8} y={y + 4} textAnchor="end">{text}</text>
        </g>
      ))}
      {[0, 1, 2, 3, 4, 5, 6].map((i) => {
        const x = Math.round(left + i * step);
        return (
          <g key={i}>
            <path d={`M${x + 0.5} ${PLOT_BOTTOM + 3}v4`} stroke="#000" />
            <text x={x} y={PLOT_BOTTOM + 18} textAnchor="middle">{i * 2000}</text>
          </g>
        );
      })}
      <text className="title" x={(left + PLOT_RIGHT) / 2 - 2} y="147" textAnchor="middle">Range (m)</text>
      <text className="title" transform="translate(33 60) rotate(-90)" textAnchor="middle">{title}</text>
    </ChartSvg>
  );
}

function scopeTrace() {
  const rnd = makeRandom(5);
  const pts: string[] = ["71,90", "72,60"];
  for (let x = 73; x <= 383; x += 0.5) {
    const d = x - 71;
    const fall = 105 - 62 * Math.exp(-Math.pow((d - 8) / 15, 1.15));
    const y = (d < 8 ? 49 - (d - 2) * 0.9 : Math.min(103, fall + 2)) + (rnd() - 0.5) * (d < 30 ? 5 : 7);
    pts.push(`${x},${y.toFixed(1)}`);
  }
  return pts.join(" ");
}

function velocityTrace() {
  const rnd = makeRandom(41);
  const calm: [number, number][] = [
    [0, 60], [1, 51], [2, 64], [4, 67], [7, 64], [9, 72], [11, 73], [13, 66], [15, 72], [17, 70], [18, 58],
    [21, 53], [24, 53], [27, 52], [29, 50], [30, 62], [32, 76], [34, 80], [36, 73], [38, 80], [40, 78],
    [43, 68], [45, 70], [47, 60], [49, 64], [51, 50], [53, 56], [55, 44], [57, 47],
  ];
  let d = "";
  calm.forEach(([x, y], i) => {
    d += `${i ? "L" : "M"}${76 + x} ${PLOT_TOP + y} l0.500 ${((rnd() - 0.5) * 8).toFixed(1)}`;
  });
  let bars = "M76.500 70V111";
  let run = 0;
  for (let x = 58; x < 308; x++) {
    const px = 76.5 + x;
    const r = rnd();
    const full = x > 130 ? 0.2 : 0.1;
    let top = rnd() < (x < 85 ? 0.6 : 0) ? 15 + rnd() * 32 : rnd() < 0.14 ? rnd() * 50 : 0;
    let bottom = 52 + rnd() * 14 + smooth(x / 6, 4) * 6;
    if (run > 0) {
      bottom = 103;
      run--;
    } else if (x > 70 && r < full) {
      bottom = 103;
      run = Math.floor(rnd() * 4);
    } else if (r < full + 0.14) bottom = 66 + rnd() * 16;
    if (x < 80 && top > 0) bottom = Math.min(bottom, 56);
    if (rnd() < 0.04) top = 50;
    if (top >= bottom) top = 0;
    bars += `M${px} ${(PLOT_TOP + top).toFixed(1)}V${(PLOT_TOP + bottom).toFixed(1)}`;
  }
  return { d, bars };
}

const scopePoints = scopeTrace();
const velocity = velocityTrace();

/* ---------- remaining parts ---------- */

const SideFlap = styled.aside`
  position: absolute;
  right: -1px;
  bottom: 48px;
`;

const PathGlyph = () => (
  <svg width="10" height="16" viewBox="0 0 10 16">
    <rect width="10" height="16" fill="#c9c9c9" />
    <path d="M2 3.500h3v3H2zM5 10.500h3v3H5zM3.500 6.500v2h3v2" fill="none" stroke="#222" />
  </svg>
);

const ViGlyph = () => (
  <svg width="16" height="17" viewBox="0 0 16 17">
    <rect x=".5" y=".5" width="15" height="16" fill="#fff" stroke="#111" />
    <path d="M3 8h10v5H3zM5 13v3M11 13v3M9 8V5l3-2v5" fill="none" stroke="#111" />
    <path d="M6 9l4 3M10 9l-4 3" stroke="#c22" />
  </svg>
);

const tabs = ["System setup", "Real time data", "Temp/humidity", "Scheduling", "Wind profile"];

const DataColumn = () => (
  <LeftColumn>
    <ScopePanel $gap={4}>
      <Scope left={71} title="A-scope" majors={[33, 57, 82, 106]}
        ticks={[["1.20", 8], ["1.15", 33], ["1.10", 57], ["1.05", 82], ["0.99", 110]]}>
        <polyline points={scopePoints} fill="none" stroke="#fff" strokeWidth="1" />
        <path d="M201.500 8V111" stroke="#e6e040" />
      </Scope>
    </ScopePanel>
    <ControlBox>
      <ControlSide>
        <BackgroundCell>
          <Row>
            <PanelButton $w={188} $h={36}>Renew background now</PanelButton>
            <svg width="20" height="20" viewBox="0 0 20 20" role="img" aria-label="Background status">
              <circle cx="10" cy="10" r="9.500" fill="#b3a684" />
              <circle cx="9.500" cy="9.500" r="8" fill="#153d12" />
              <circle cx="8" cy="7" r="3" fill="#3b6d36" />
            </svg>
          </Row>
          <Row $pad={10}>
            <BoldLabel htmlFor="rays" $w={107}>Rays in background</BoldLabel>
            <Stepper name="Step rays" />
            <NumberBox id="rays" $w={30} $tone="amber" defaultValue="8" />
          </Row>
        </BackgroundCell>
        <ThresholdCell>
          <BoldLabel htmlFor="snr" $w={122}>Display SNR threshold</BoldLabel>
          <Stepper name="Step threshold" />
          <NumberBox id="snr" $w={44} $tone="amber" defaultValue="1.002" />
        </ThresholdCell>
      </ControlSide>
      <ScannerCell>
        <BoldLabel as="h3" $blue>Scanner position</BoldLabel>
        <AxisField>
          <label htmlFor="az">AZ</label>
          <NumberBox id="az" $w={95} $tone="white" defaultValue="090.001" readOnly />
        </AxisField>
        <AxisField>
          <label htmlFor="el">EL</label>
          <NumberBox id="el" $w={95} $tone="white" defaultValue="090.000" readOnly />
        </AxisField>
      </ScannerCell>
    </ControlBox>
    <ScopePanel $gap={11}>
      <Scope left={76} title="Velocity (m/s)" majors={[34, 59, 85]}
        ticks={[["5.00", 8], ["2.50", 34], ["0.00", 59], ["-2.50", 85], ["-5.00", 110]]}>
        <path d={velocity.d} fill="none" stroke="#fff" strokeWidth="1.500" />
        <path d={velocity.bars} stroke="#fff" />
      </Scope>
    </ScopePanel>
    <LogBox>
      <LogHeader>
        <LogTitles>
          <BoldLabel as="span" $blue>Data Logging</BoldLabel>
          <BoldLabel htmlFor="processed">Processed Data file</BoldLabel>
        </LogTitles>
        <HeaderButton><PanelButton $w={134} $h={24} $bold>Restart processed file</PanelButton></HeaderButton>
        <LoggingTag><BoldLabel as="span" $blue>Logging</BoldLabel></LoggingTag>
      </LogHeader>
      <PathRow>
        <PathField>
          <Drive>C</Drive><PathGlyph />
          <PathInput id="processed" defaultValue={"C:\\Lidar\\Data\\Proc\\2023\\202308\\20230814\\Stare_122_20230814_23.hpl"} />
        </PathField>
        <ToggleButton $on aria-pressed="true">ON
          <svg width="11" height="12" viewBox="0 0 11 12"><path d="M0 0q9 1 11 6-2 5-11 6z" fill="#55e01c" /></svg>
        </ToggleButton>
      </PathRow>
      <Row $pad={16}><BoldLabel htmlFor="raw">RAW Data file</BoldLabel></Row>
      <PathRow>
        <PathField>
          <Drive>C</Drive><PathGlyph />
          <PathInput id="raw" defaultValue="" />
        </PathField>
        <ToggleButton aria-pressed="false">OFF
          <svg width="10" height="12" viewBox="0 0 11 12"><path d="M0 0q9 1 11 6-2 5-11 6z" fill="#1c4a16" /></svg>
        </ToggleButton>
      </PathRow>
    </LogBox>
    <ActionRow>
      <PanelButton $w={100} $h={48} $danger>STOP<br />software</PanelButton>
      <PanelButton $w={116} $h={48}>Change LiDAR<br />Settings</PanelButton>
    </ActionRow>
  </LeftColumn>
);

const MapColumn = () => (
  <RightColumn>
    <MapHeading>Backscatter</MapHeading>
    <MapRow>
      <IntensityMap paint={backscatter} label="Backscatter map" />
      <ScaleBar $edge="#d46ac0" $top="#000" />
      <ScaleTicks><li>-3.0</li><li>-5.5</li><li>-8.0</li></ScaleTicks>
      <ScaleTitle $top={38}><SideTitle $down>log B (/m/sr)</SideTitle></ScaleTitle>
    </MapRow>
    <DopplerBar>
      <MapHeading>Doppler</MapHeading>
      <AverageGroup>
        <BoldLabel htmlFor="avg">Average number</BoldLabel>
        <NumberBox id="avg" $w={28} $tone="grey" defaultValue="1" readOnly />
        <BoldLabel htmlFor="avgTotal">of</BoldLabel>
        <NumberBox id="avgTotal" $w={28} $tone="grey" defaultValue="1" readOnly />
      </AverageGroup>
      <Row $gap={12}>
        <BoldLabel as="span">Backscatter</BoldLabel>
        <svg width="27" height="22" viewBox="0 0 27 22" role="img" aria-label="Backscatter switch">
          <ellipse cx="17" cy="16" rx="5" ry="6" fill="#7c6e50" />
          <circle cx="21" cy="10" r="6" fill="#b4b4b4" stroke="#777" />
          <rect x="3" y="5" width="20" height="11" rx="5" fill="#383838" />
          <circle cx="7" cy="10" r="5" fill="#a5a5a5" />
          <circle cx="6" cy="9" r="2" fill="#fff" />
        </svg>
      </Row>
    </DopplerBar>
    <MapRow>
      <IntensityMap paint={doppler} label="Doppler map" />
      <ScaleBar $edge="#000" $top="#f01ce0" />
      <ScaleTicks><li>4.0</li><li>0.0</li><li>-4.0</li></ScaleTicks>
      <ScaleTitle $top={34}><SideTitle $down>Velocity (m/s)</SideTitle></ScaleTitle>
    </MapRow>
  </RightColumn>
);

const RemoteTaskbar = () => (
  <TaskbarRoot $remote>
    <TaskButton $w={55} aria-label="Start"><StartOrb size={37} /></TaskButton>
    <RemoteButtons>
      <TaskButton $w={51} $state="open" aria-label="Notepad">
        <svg width="30" height="32" viewBox="0 0 30 32">
          <path d="M25 3l4 24-7 4z" fill="#9a8672" />
          <path d="M9 3l17 1-3 27L1 24z" fill="#7fc2cf" stroke="#e4f2f4" />
          <path d="M9 3l17 1-1 5L7 8z" fill="#e4eef0" /><path d="M10 3v-2M14 3V1M18 4V1M22 4V2" stroke="#556" />
        </svg>
      </TaskButton>
      <Slice $w={5} />
      <TaskButton $w={59} $state="open" aria-label="Control panel">
        <svg width="34" height="32" viewBox="0 0 34 32">
          <rect x="1" y="1" width="31" height="24" rx="2" fill="#3d96d4" stroke="#1c6cae" />
          <circle cx="10" cy="10" r="5" fill="none" stroke="#fff" strokeWidth="1.500" /><path d="M10 10V5a5 5 0 0 1 5 5z" fill="#f39b2d" />
          <path d="M19 7h4v3h-4zM25 7h4v3h-4zM19 13h4v3h-4zM25 13h4v3h-4z" fill="none" stroke="#d8efff" />
          <circle cx="8" cy="20" r="1.500" fill="#f3b52d" /><circle cx="13" cy="20" r="1.500" fill="#f3b52d" />
          <path d="M11 29q0-6 6-7 6 1 6 7-6 4-12 0z" fill="#d6dade" stroke="#93999f" />
        </svg>
      </TaskButton>
      <TaskButton $w={59} $state="open" aria-label="Sticky notes">
        <svg width="32" height="30" viewBox="0 0 32 30">
          <path d="M6 2l14 5-5 14L0 16z" fill="#a5dc9a" /><path d="M8 9l13-2 3 14-13 4z" fill="#7fb6e6" />
          <path d="M12 9l15-4 4 16-14 6z" fill="#f8dd55" stroke="#dcb92f" strokeWidth=".5" />
        </svg>
      </TaskButton>
      <TaskButton $w={59} $state="open" aria-label="Stop tool">
        <svg width="32" height="32" viewBox="0 0 32 32">
          <rect x=".5" y=".5" width="31" height="31" rx="3" fill="#f40a0a" stroke="#111" />
          <circle cx="16" cy="16" r="11" fill="none" stroke="#fff" strokeWidth="3" /><path d="M16 9v14" stroke="#fff" strokeWidth="3" />
        </svg>
      </TaskButton>
      <TaskButton $w={59} $state="active" aria-label="StreamLine XR">
        <svg width="32" height="32" viewBox="0 0 32 32">
          <rect x=".5" y=".5" width="31" height="31" fill="#e0e0e0" stroke="#111" />
          <text x="16" y="12" fontSize="11" fill="#16166a">XR</text>
          <path d="M7 19h16v9H7zM10 24v7M21 24v7M10 25h11M18 19v-4h5v5" fill="#fff" stroke="#111" strokeWidth="1.500" />
          <path d="M11 22l6 2" stroke="#c22" strokeWidth="2" />
        </svg>
      </TaskButton>
      <TaskButton $w={59} $state="open" aria-label="Command prompt">
        <svg width="30" height="27" viewBox="0 0 30 27">
          <rect width="30" height="27" fill="#050505" stroke="#888" /><rect width="30" height="3" fill="#c7ccd2" />
          <text x="3" y="13" fontSize="8" fontWeight="700" fill="#fff">C:\_</text>
        </svg>
      </TaskButton>
      <TaskButton $w={59} $state="open" aria-label="Scan scheduler">
        <svg width="32" height="32" viewBox="0 0 32 32">
          <rect x=".5" y=".5" width="31" height="31" fill="#bdbdbd" stroke="#111" />
          <text x="3" y="11" fontSize="10">Scan</text><text x="2" y="25" fontSize="10">sched</text>
        </svg>
      </TaskButton>
      <TaskButton $w={59} $state="open" aria-label="Explorer"><FolderMark size={32} /></TaskButton>
    </RemoteButtons>
    <Tray>
      <TrayIcons $gap={8}><Caret /><SpeakerMark size={17} /><FlagMark size={16} /></TrayIcons>
      <Clock $w={80}>23:30<br />14/08/2023</Clock>
      <ShowDesktop aria-label="Show desktop" />
    </Tray>
  </TaskbarRoot>
);

export default function App() {
  return (
    <>
      <Global />
      <Desktop>
        <Streaks viewBox="0 0 1920 1080" preserveAspectRatio="none">
          <defs><filter id="soft" x="-20%" y="-50%" width="140%" height="200%"><feGaussianBlur stdDeviation="7" /></filter></defs>
          <g filter="url(#soft)" fill="none" stroke="#0f5fdc">
            <path d="M0 132Q140 130 330 205" strokeWidth="7" opacity=".35" />
            <path d="M60 210Q200 218 330 213" strokeWidth="4" opacity=".3" />
            <path d="M-10 535Q150 655 330 775" strokeWidth="18" opacity=".35" />
            <path d="M1740 560Q1840 490 1940 425" strokeWidth="18" opacity=".45" />
            <path d="M1740 300Q1840 270 1940 230" strokeWidth="16" opacity=".3" />
            <path d="M1740 772Q1840 760 1940 757" strokeWidth="5" opacity=".4" />
            <path d="M690 60 770 -10" strokeWidth="10" opacity=".5" />
          </g>
        </Streaks>
        <Shortcuts>
          {desktopItems.map(([name, icon]) => (
            <Shortcut href="#" key={name}>{icon ?? <ChromeShortcut />}<span>{name}</span></Shortcut>
          ))}
        </Shortcuts>
        <RemoteWindow>
          <TitleBar>
            <TitleText><RdpMark size={19} />192.168.0.150 - Remote Desktop Connection</TitleText>
            <CaptionGroup>
              <CaptionButton $w={35} aria-label="Minimise">
                <svg width="17" height="16" viewBox="0 0 17 16"><path d="M.5 11h16v4H.5z" fill="#fff" stroke="#47577c" /></svg>
              </CaptionButton>
              <CaptionButton $w={33} aria-label="Restore">
                <svg width="18" height="14" viewBox="0 0 18 14"><path d="M.5.5h17v13H.5zM5 5v4.500h8V5z" fill="#fff" fillRule="evenodd" stroke="#47577c" /></svg>
              </CaptionButton>
              <CaptionButton $w={58} aria-label="Close">
                <svg width="16" height="14" viewBox="0 0 16 14"><path d="M1 .5h4.500L8 3.500 10.500.5H15L10.500 7 15 13.500h-4.500L8 10.500l-2.500 3H1L5.500 7z" fill="#fff" stroke="#47577c" /></svg>
              </CaptionButton>
            </CaptionGroup>
          </TitleBar>
          <Screen>
            <MdiBar>
              <ViGlyph />
              <h2>StreamLine XR v14-6.vi</h2>
              <MdiControls>
                <MdiButton aria-label="Minimise panel">
                  <svg width="11" height="9" viewBox="0 0 11 9"><path d="M.5 4.500h10v4H.5z" fill="#fff" stroke="#54657c" /></svg>
                </MdiButton>
                <MdiButton aria-label="Restore panel">
                  <svg width="12" height="11" viewBox="0 0 12 11"><path d="M4.500.5h7v6h-7z" fill="#dfe7ef" stroke="#54657c" /><path d="M.5 4.500h7v6h-7zM2.500 6.500h3v2h-3z" fill="#fff" stroke="#54657c" /></svg>
                </MdiButton>
                <MdiButton aria-label="Close panel">
                  <svg width="12" height="10" viewBox="0 0 16 14"><path d="M1 .5h4.500L8 3.500 10.500.5H15L10.500 7 15 13.500h-4.500L8 10.500l-2.500 3H1L5.500 7z" fill="#e4ebf2" stroke="#44546a" strokeWidth="1.400" /></svg>
                </MdiButton>
              </MdiControls>
            </MdiBar>
            <Workspace>
              <TabList role="tablist">
                {tabs.map((t, i) => <Tab key={t} role="tab" aria-selected={i === 1} $on={i === 1}>{t}</Tab>)}
              </TabList>
              <TabPage role="tabpanel">
                <BlueFrame>
                  <FrontPanel>
                    <DataColumn />
                    <MapColumn />
                  </FrontPanel>
                </BlueFrame>
              </TabPage>
              <SideFlap>
                <svg width="25" height="53" viewBox="0 0 25 53" role="img" aria-label="Remote support">
                  <path d="M25 1H4Q1 1 1 4v34q0 3 3 4l21 10z" fill="#fff" />
                  <rect x="4" y="6" width="20" height="20" fill="#0f8fe8" />
                  <circle cx="14" cy="16" r="8.500" fill="#fff" />
                  <path d="M6.500 16l4-3.500v2.500h7v-2.500l4 3.500-4 3.500V17h-7v2.500z" fill="#1a7fdc" />
                </svg>
              </SideFlap>
            </Workspace>
            <RemoteTaskbar />
          </Screen>
        </RemoteWindow>
        <TaskbarRoot>
          <TaskButton $w={66} aria-label="Start"><StartOrb size={44} /></TaskButton>
          <TaskButton $w={76} aria-label="Internet Explorer"><IeMark /></TaskButton>
          <TaskButton $w={67} $state="open" aria-label="Explorer"><FolderMark size={42} /></TaskButton>
          <TaskButton $w={68} aria-label="Media player"><PlayerMark /></TaskButton>
          <TaskButton $w={75} aria-label="Chrome"><ChromeMark size={40} /></TaskButton>
          <TaskButton $w={62} $state="active" aria-label="Remote desktop"><RdpMark size={42} /></TaskButton>
          <Slice $w={4} />
          <Tray>
            <TrayIcons $gap={10}>
              <Caret /><FlagMark alert /><BatteryMark /><NetworkMark /><SpeakerMark muted />
            </TrayIcons>
            <Clock $w={104}>23:30<br />14/08/2023</Clock>
            <ShowDesktop aria-label="Show desktop" />
          </Tray>
        </TaskbarRoot>
      </Desktop>
    </>
  );
}
